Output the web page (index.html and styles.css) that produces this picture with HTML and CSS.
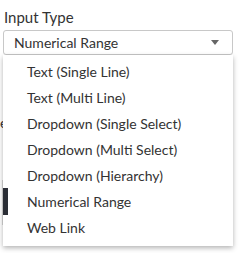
FILE: index.html
```html
<!DOCTYPE html>
<html>
<head>
<meta charset="utf-8">
<title>Input Type</title>
<link rel="stylesheet" href="styles.css">
</head>
<body>
<div class="field">
  <label class="label">Input Type</label>
  <div class="select">
    <span>Numerical Range</span>
    <span class="arrow"></span>
  </div>
  <div class="behind">
    <div class="ghost-text">e</div>
  </div>
  <ul class="menu">
    <li>Text (Single Line)</li>
    <li>Text (Multi Line)</li>
    <li>Dropdown (Single Select)</li>
    <li>Dropdown (Multi Select)</li>
    <li>Dropdown (Hierarchy)</li>
    <li>Numerical Range</li>
    <li>Web Link</li>
  </ul>
  <div class="ghost-box"><div class="ghost-bar"></div></div>
</div>
</body>
</html>
```

FILE: styles.css
```css
body {
	margin: 0;
	background-color: #fff;
	font-family: Lato, "Open Sans", sans-serif;
	color: #333;
}

.field {
	position: relative;
	padding: 7px 6px 0 3px;
}

.label {
	display: block;
	font-size: 15px;
	line-height: 20px;
	padding-left: 1px;
	margin-bottom: 3px;
}

.select {
	display: flex;
	align-items: center;
	justify-content: space-between;
	height: 23px;
	border: 1px solid #c8c8c8;
	border-radius: 3px;
	padding: 0 13px 0 10px;
	font-size: 14px;
}

.arrow {
	width: 0;
	height: 0;
	border-left: 4px solid transparent;
	border-right: 4px solid transparent;
	border-top: 5px solid #666;
}

.behind {
	height: 200px;
	position: relative;
}

.ghost-text {
	position: absolute;
	left: -3px;
	top: 59px;
	font-size: 14px;
}

.ghost-box {
	position: absolute;
	left: 2px;
	top: 180px;
	width: 6px;
	height: 45px;
	border-left: 1px solid #bbb;
}

.ghost-bar {
	margin: 8px 0 0 0;
	width: 5px;
	height: 27px;
	background: #2a2d35;
}

.menu {
	position: absolute;
	left: 3px;
	top: 55px;
	width: 230px;
	margin: 0;
	padding: 4px 0 5px;
	list-style: none;
	background: #fff;
	box-shadow: 0 2px 5px rgba(0, 0, 0, 0.3);
	font-size: 14px;
}

.menu li {
	line-height: 26px;
	padding-left: 24px;
}
```
